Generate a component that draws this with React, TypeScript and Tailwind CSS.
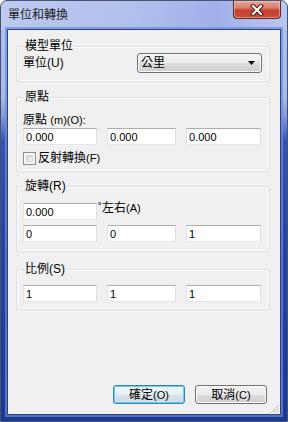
const inputCls =
  "h-[17px] bg-white border border-[#abadb3] border-l-[#e2e3ea] border-r-[#dbdfe6] border-b-[#e3e9ef] pl-[2px] flex items-center leading-[14px] text-[11px]";

function Field({ value, w }: { value: string; w: string }) {
  return <div className={`${inputCls} ${w}`}>{value}</div>;
}

function Group({
  title,
  className,
  children,
}: {
  title: string;
  className?: string;
  children: React.ReactNode;
}) {
  return (
    <fieldset
      className={`border border-[#d5dfe5] rounded-[3px] shadow-[inset_0_0_0_1px_#ffffff] pl-[6px] pr-[8px] ${className ?? ""}`}
    >
      <legend className="ml-[1px] px-[1px] leading-[14px]">{title}</legend>
      {children}
    </fieldset>
  );
}

function TripleRow({ a, b, c, className }: { a: string; b: string; c: string; className?: string }) {
  return (
    <div className={`flex gap-[10px] ${className ?? ""}`}>
      <Field value={a} w="w-[74px]" />
      <Field value={b} w="w-[69px]" />
      <Field value={c} w="w-[75px]" />
    </div>
  );
}

export default function App() {
  return (
    <div className="w-[288px] h-[422px] font-['Liberation_Sans','Noto_Sans_CJK_TC',sans-serif] text-[12px] leading-[14px] text-black">
      <div className="relative w-full h-full flex flex-col rounded-t-[7px] border border-[#46536f] bg-[linear-gradient(180deg,#b3c1ee_0px,#a9baeb_95px,#8499da_115px,#3354b2_140px,#2444a0_250px,#1c3a92_100%)]">
        {/* title bar */}
        <div className="h-[29px] flex items-start bg-[linear-gradient(90deg,rgba(255,255,255,0.15)_0%,rgba(255,255,255,0)_45%,rgba(110,130,220,0.25)_75%,rgba(255,255,255,0.1)_100%)] rounded-t-[6px]">
          <div className="pl-[7px] pt-[7px] text-[12px] text-[#1b1b1b]">單位和轉換</div>
          <div className="ml-auto mr-[6px] w-[48px] h-[18px] rounded-b-[4px] border border-t-0 border-[#5e2a22] bg-[linear-gradient(180deg,#e8a597_0%,#d87f6e_40%,#c6402c_55%,#c54d38_100%)] shadow-[inset_0_0_0_1px_rgba(255,220,210,0.45)] flex items-center justify-center">
            <svg width="14" height="12" viewBox="0 0 14 12">
              <path d="M3 2 L11 10 M11 2 L3 10" stroke="#4a1a14" strokeWidth="4.2" strokeLinecap="square" />
              <path d="M3 2 L11 10 M11 2 L3 10" stroke="#ffffff" strokeWidth="2.2" strokeLinecap="square" />
            </svg>
          </div>
        </div>

        {/* client area */}
        <div className="relative flex-1 mx-[7px] mb-[7px] bg-[#f0f0f0] shadow-[0_0_0_1px_#2f4177,0_0_0_3px_rgba(110,140,220,0.7)] flex flex-col pl-[8px] pr-[10px] pt-[9px]">
          <Group title="模型單位" className="pb-[8px]">
            <div className="flex items-center">
              <span>單位(U)</span>
              <div className="ml-auto mr-[-1px] w-[125px] h-[20px] rounded-[3px] border border-[#707070] bg-[linear-gradient(180deg,#f2f2f2_0%,#ebebeb_50%,#dddddd_50%,#cfcfcf_100%)] shadow-[inset_0_0_0_1px_#fcfcfc] flex items-center pl-[3px] pr-[6px]">
                <span>公里</span>
                <svg className="ml-auto" width="7" height="4" viewBox="0 0 7 4">
                  <path d="M0 0 H7 L3.5 4 Z" fill="#000" />
                </svg>
              </div>
            </div>
          </Group>

          <Group title="原點" className="mt-[8px] pb-[6px]">
            <div className="mt-[9px]">
              原點 <span className="text-[11px]">(m)(O):</span>
            </div>
            <TripleRow a="0.000" b="0.000" c="0.000" className="mt-[1px]" />
            <div className="mt-[6px] flex items-center h-[14px]">
              <div className="w-[13px] h-[13px] border border-[#8e8f8f] bg-[#f4f4f4] p-[2px]">
                <div className="w-full h-full bg-[linear-gradient(135deg,#cbcfd5,#f6f6f6)] border border-[#d5d8dc]" />
              </div>
              <span className="ml-[2px]">
                反射轉換<span className="text-[11px]">(F)</span>
              </span>
            </div>
          </Group>

          <Group title="旋轉(R)" className="mt-[7px] pb-[9px]">
            <div className="mt-[10px] flex items-start">
              <Field value="0.000" w="w-[74px]" />
              <span className="ml-[1px] -mt-[2px]">
                ˚左右<span className="text-[11px]">(A)</span>
              </span>
            </div>
            <TripleRow a="0" b="0" c="1" className="mt-[5px]" />
          </Group>

          <Group title="比例(S)" className="mt-[10px] pb-[7px]">
            <TripleRow a="1" b="1" c="1" className="mt-[9px]" />
          </Group>

          <div className="mt-auto mb-[10px] mr-[3px] flex justify-end gap-[10px]">
            <div className="w-[72px] h-[19px] rounded-[3px] border border-[#3c7fb1] bg-[linear-gradient(180deg,#f2f7fa_0%,#e6eef3_50%,#d6e3eb_50%,#cddbe4_100%)] shadow-[inset_0_0_0_1px_#5fd3f7] flex items-center justify-center">
              確定<span className="text-[11px]">(O)</span>
            </div>
            <div className="w-[72px] h-[19px] rounded-[3px] border border-[#707070] bg-[linear-gradient(180deg,#f2f2f2_0%,#ebebeb_50%,#dddddd_50%,#cfcfcf_100%)] shadow-[inset_0_0_0_1px_#fcfcfc] flex items-center justify-center">
              取消<span className="text-[11px]">(C)</span>
            </div>
          </div>

          {/* resize grip */}
          <svg className="absolute right-0 bottom-0" width="11" height="11" viewBox="0 0 11 11">
            <path d="M10 2 L2 10 M10 5 L5 10 M10 8 L8 10" stroke="#b4b4b4" strokeWidth="1" />
            <path d="M11 2 L2 11 M11 5 L5 11 M11 8 L8 11" stroke="#ffffff" strokeWidth="1" />
          </svg>
        </div>
      </div>
    </div>
  );
}
